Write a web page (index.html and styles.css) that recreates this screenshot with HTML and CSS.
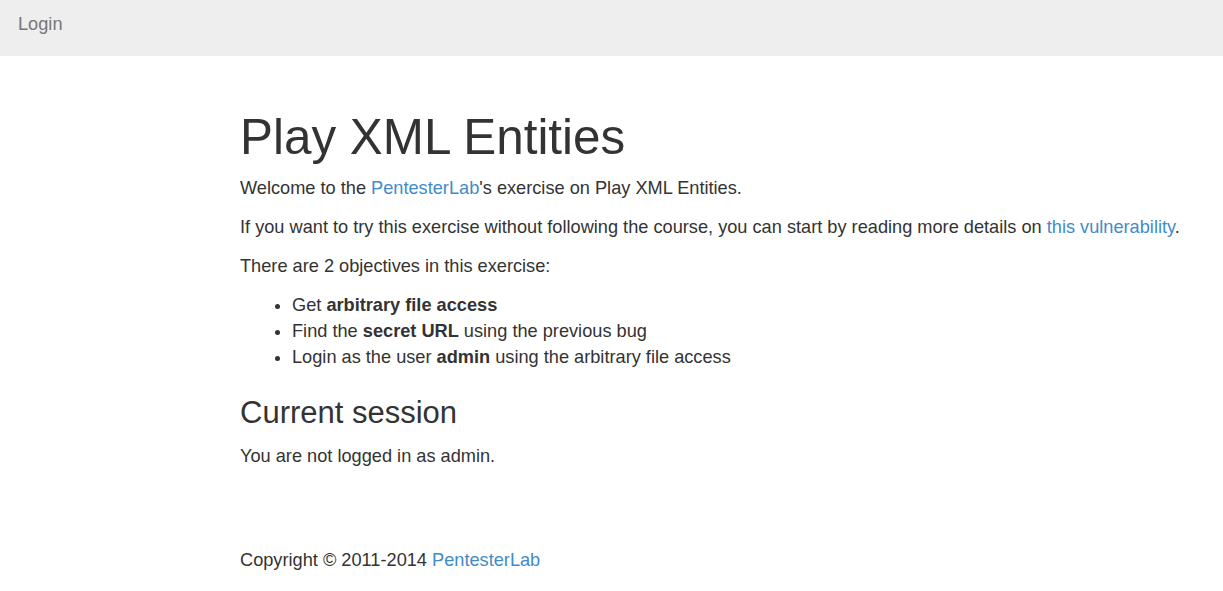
FILE: index.html
```html
<!DOCTYPE html>
<html>
<head>
<meta charset="utf-8">
<link rel="stylesheet" href="styles.css">
</head>
<body>
<nav class="navbar">
  <a class="navbar-link" href="#">Login</a>
</nav>
<div class="container">
  <h1 class="title">Play XML Entities</h1>
  <p>Welcome to the <a href="#">PentesterLab</a>'s exercise on Play XML Entities.</p>
  <p>If you want to try this exercise without following the course, you can start by reading more details on <a href="#">this vulnerability</a>.</p>
  <p>There are 2 objectives in this exercise:</p>
  <ul class="objectives">
    <li>Get <b>arbitrary file access</b></li>
    <li>Find the <b>secret URL</b> using the previous bug</li>
    <li>Login as the user <b>admin</b> using the arbitrary file access</li>
  </ul>
  <h2 class="subtitle">Current session</h2>
  <p>You are not logged in as admin.</p>
  <footer class="footer">
    <p>Copyright © 2011-2014 <a href="#">PentesterLab</a></p>
  </footer>
</div>
</body>
</html>
```
FILE: styles.css
```css
html, body {
  margin: 0;
  padding: 0;
}
body {
  font-family: "Liberation Sans", Arial, sans-serif;
  font-size: 18.2px;
  line-height: 26px;
  color: #333;
  background: #fff;
}
a {
  color: #428bca;
  text-decoration: none;
}
.navbar {
  background: #eeeeee;
  height: 56px;
  display: flex;
  align-items: flex-start;
  padding: 11px 18px 0;
  box-sizing: border-box;
}
.navbar-link {
  color: #777;
}
.container {
  padding-left: 240px;
  padding-top: 54px;
}
.title {
  font-size: 49.4px;
  font-weight: 500;
  line-height: 1.1;
  margin: 0 0 11px;
}
p {
  margin: 0 0 13px;
}
.objectives {
  margin: 0 0 13px;
  padding-left: 52px;
}
.subtitle {
  font-size: 31px;
  font-weight: 500;
  line-height: 1.1;
  margin: 26px 0 13px;
}
.footer {
  margin-top: 78px;
}
```
